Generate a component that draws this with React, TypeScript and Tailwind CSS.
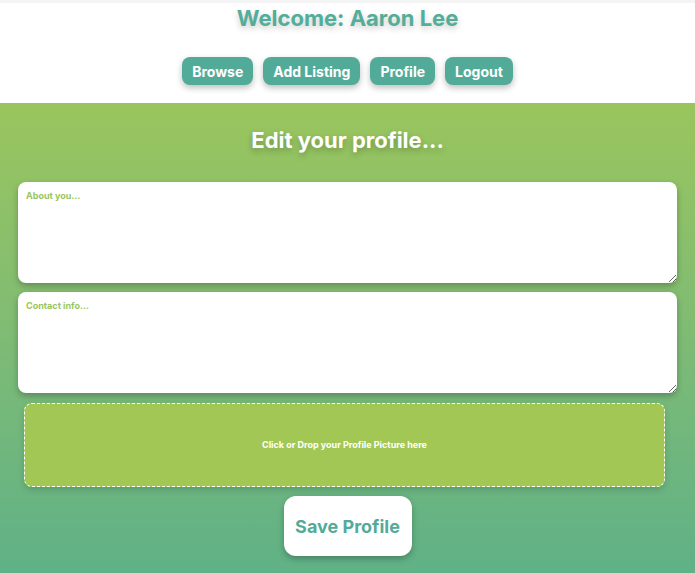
const navItems = ["Browse", "Add Listing", "Profile", "Logout"];

const App = () => {
  return (
    <div className="min-h-screen flex flex-col font-['Inter',sans-serif]">
      {/* Header */}
      <div className="bg-white border-t-[3px] border-[#f3f4f3] h-[103px] flex flex-col items-center">
        <h1 className="text-[22px] leading-[30px] font-bold text-[#52ad99] [text-shadow:0_3px_6px_rgba(0,0,0,0.2)]">
          Welcome: Aaron Lee
        </h1>
        <div className="flex gap-[10px] mt-[24px]">
          {navItems.map((item) => (
            <button
              key={item}
              className="h-[28px] px-[10px] rounded-lg bg-[#52ab98] text-white text-[14px] font-bold shadow-[0_3px_6px_rgba(0,0,0,0.25)]"
            >
              {item}
            </button>
          ))}
        </div>
      </div>

      {/* Edit area */}
      <div className="flex-1 bg-gradient-to-b from-[#9ac55c] to-[#5fb187] px-[18px] pb-[18px] flex flex-col items-center">
        <h2 className="mt-[22px] text-[22px] leading-[30px] font-bold text-white [text-shadow:0_3px_6px_rgba(0,0,0,0.25)]">
          Edit your profile...
        </h2>

        <textarea
          placeholder="About you..."
          className="mt-[27px] w-full h-[101px] rounded-lg bg-white px-[8px] py-[7px] text-[9px] font-bold outline-none placeholder:text-[#9ac55c] shadow-[0_3px_6px_rgba(0,0,0,0.25)]"
        />
        <textarea
          placeholder="Contact info..."
          className="mt-[9px] w-full h-[101px] rounded-lg bg-white px-[8px] py-[7px] text-[9px] font-bold outline-none placeholder:text-[#9ac55c] shadow-[0_3px_6px_rgba(0,0,0,0.25)]"
        />

        {/* Drop zone */}
        <div className="mt-[10px] self-start ml-[6px] w-[641px] h-[84px] rounded-lg bg-[#a3c755] border border-dashed border-white flex items-center justify-center shadow-[0_3px_6px_rgba(0,0,0,0.15)]">
          <p className="text-[9px] font-bold text-white">
            Click or Drop your Profile Picture here
          </p>
        </div>

        <button className="mt-[9px] w-[128px] h-[60px] rounded-xl bg-white text-[#52ab98] text-[18px] font-bold shadow-[0_3px_6px_rgba(0,0,0,0.25)]">
          Save Profile
        </button>
      </div>
    </div>
  );
};

export default App;
